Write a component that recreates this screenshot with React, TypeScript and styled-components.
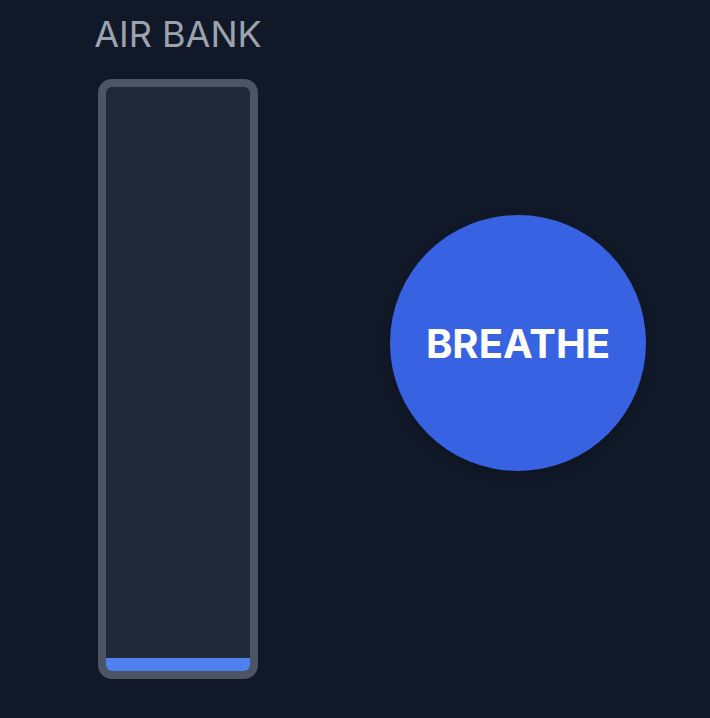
import React from "react";
import styled, { createGlobalStyle } from "styled-components";

const Global = createGlobalStyle`
  html, body {
    margin: 0;
    padding: 0;
    background: #111827;
    font-family: Inter, "Noto Sans", sans-serif;
  }
  #root { min-height: 100vh; }
`;

const Page = styled.div`
  display: flex;
  align-items: flex-start;
  gap: 132px;
  padding: 12px 0 0 98px;
  min-height: 718px;
  box-sizing: border-box;
  background: #111827;
`;

const Column = styled.div`
  width: 160px;
  display: flex;
  flex-direction: column;
  align-items: center;
  gap: 23px;
`;

const Label = styled.div`
  font-size: 36px;
  font-weight: 400;
  color: #9ca3af;
  white-space: nowrap;
  line-height: normal;
`;

const Tank = styled.div`
  width: 160px;
  height: 600px;
  box-sizing: border-box;
  border: 8px solid #4b5563;
  border-radius: 14px;
  background: #1f2937;
  overflow: hidden;
  display: flex;
  flex-direction: column;
  justify-content: flex-end;
`;

const Fill = styled.div`
  width: 100%;
  background: #4f80ee;
`;

const BreatheButton = styled.button`
  margin-top: 203px;
  width: 256px;
  height: 256px;
  border-radius: 50%;
  border: none;
  background: #3763e3;
  color: #ffffff;
  font-family: Inter, "Noto Sans", sans-serif;
  font-weight: 700;
  font-size: 40px;
  box-shadow: 0 4px 12px rgba(0, 0, 0, 0.15);
  display: flex;
  align-items: center;
  justify-content: center;
  cursor: pointer;
  padding: 0;
`;

export default function App() {
  const level = 2.2;
  return (
    <>
      <Global />
      <Page>
        <Column>
          <Label>AIR BANK</Label>
          <Tank>
            <Fill style={{ height: `${level}%` }} />
          </Tank>
        </Column>
        <BreatheButton>BREATHE</BreatheButton>
      </Page>
    </>
  );
}
